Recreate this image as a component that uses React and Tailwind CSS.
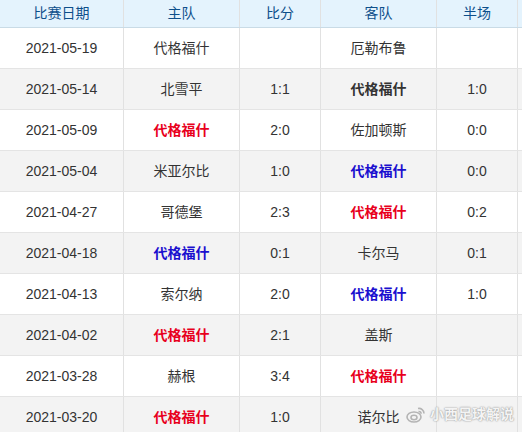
const rows = [
  { date: '2021-05-19', home: '代格福什', score: '', away: '厄勒布鲁', half: '' },
  { date: '2021-05-14', home: '北雪平', score: '1:1', away: '代格福什', awayStyle: 'bold', half: '1:0' },
  { date: '2021-05-09', home: '代格福什', homeStyle: 'red', score: '2:0', away: '佐加顿斯', half: '0:0' },
  { date: '2021-05-04', home: '米亚尔比', score: '1:0', away: '代格福什', awayStyle: 'blue', half: '0:0' },
  { date: '2021-04-27', home: '哥德堡', score: '2:3', away: '代格福什', awayStyle: 'red', half: '0:2' },
  { date: '2021-04-18', home: '代格福什', homeStyle: 'blue', score: '0:1', away: '卡尔马', half: '0:1' },
  { date: '2021-04-13', home: '索尔纳', score: '2:0', away: '代格福什', awayStyle: 'blue', half: '1:0' },
  { date: '2021-04-02', home: '代格福什', homeStyle: 'red', score: '2:1', away: '盖斯', half: '' },
  { date: '2021-03-28', home: '赫根', score: '3:4', away: '代格福什', awayStyle: 'red', half: '' },
  { date: '2021-03-20', home: '代格福什', homeStyle: 'red', score: '1:0', away: '诺尔比', half: '' },
];

const teamClass = {
  bold: 'font-bold text-[#333]',
  red: 'font-bold text-[#e8001c]',
  blue: 'font-bold text-[#1a0fcf]',
};

const cell = 'flex items-center justify-center border-r border-[#e1e1e1]';

const App = () => {
  return (
    <div
      className="relative w-[522px] h-[432px] overflow-hidden bg-white text-[14px] text-[#333]"
      style={{ fontFamily: '"Liberation Sans", "Noto Sans CJK SC", sans-serif' }}
    >
      <div className="grid grid-cols-[124px_116px_81px_116px_81px_1fr] h-[28px] bg-[#e4f3fd] border-b border-[#c9dbe6] text-[#0d4f8b]">
        <div className={cell}>比赛日期</div>
        <div className={cell}>主队</div>
        <div className={cell}>比分</div>
        <div className={cell}>客队</div>
        <div className={cell}>半场</div>
        <div />
      </div>
      {rows.map((r, i) => (
        <div
          key={r.date}
          className={`grid grid-cols-[124px_116px_81px_116px_81px_1fr] h-[41px] border-b border-[#e4e4e4] ${i % 2 ? 'bg-[#f3f3f3]' : 'bg-white'}`}
        >
          <div className={cell}>{r.date}</div>
          <div className={`${cell} ${r.homeStyle ? teamClass[r.homeStyle] : ''}`}>{r.home}</div>
          <div className={cell}>{r.score}</div>
          <div className={`${cell} ${r.awayStyle ? teamClass[r.awayStyle] : ''}`}>{r.away}</div>
          <div className={cell}>{r.half}</div>
          <div />
        </div>
      ))}
      {/* watermark */}
      <div className="absolute left-[406px] top-[404px] flex items-center gap-1">
        <svg width="20" height="18" viewBox="0 0 20 18" fill="none" stroke="#b4b4b4" strokeWidth="1.6">
          <ellipse cx="8" cy="11" rx="7" ry="5" />
          <ellipse cx="8" cy="11.5" rx="3" ry="2.2" />
          <path d="M12 2.5a5 5 0 0 1 6 5" />
          <path d="M12.5 5.5a2.2 2.2 0 0 1 2.6 2.2" />
        </svg>
        <span
          className="text-[14px] font-bold text-[#f4f4f4]"
          style={{ textShadow: '0 0 2px #9a9a9a, 0 0 1px #aaa' }}
        >
          小西足球解说
        </span>
      </div>
    </div>
  );
};

export default App;
